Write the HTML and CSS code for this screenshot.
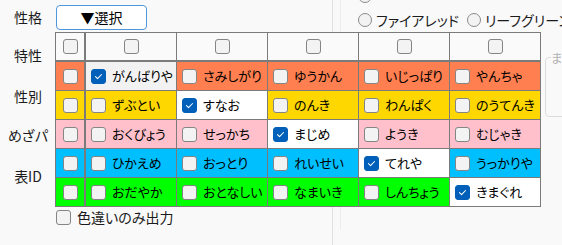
FILE: index.html
```html
<!DOCTYPE html>
<html lang="ja">
<head>
<meta charset="utf-8">
<title>性格選択</title>
<link rel="stylesheet" href="styles.css">
</head>
<body>
<div class="form">
  <div class="left">
    <div class="lrow r1"><span class="lbl">性格</span><button class="select">▼選択</button></div>
    <div class="lrow r2"><span class="lbl">特性</span></div>
    <div class="lrow r3"><span class="lbl">性別</span></div>
    <div class="lrow r4"><span class="lbl">めざパ</span></div>
    <div class="lrow r5"><span class="lbl">表ID</span></div>
  </div>
  <div class="right">
    <div class="right-inner">
      <div class="radios">
        <div class="radio-row"><span class="opt"><span class="radio"></span></span></div>
        <div class="radio-row">
          <span class="opt"><span class="radio"></span>ファイアレッド</span>
          <span class="opt"><span class="radio"></span>リーフグリーン</span>
        </div>
      </div>
      <div class="groupbox"><span class="gcap">ま</span></div>
    </div>
  </div>
</div>

<div class="popup">
  <div class="grid">
    <div class="cell hcell rh"><span class="cb"></span></div>
    <div class="cell hcell"><span class="cb"></span></div>
    <div class="cell hcell"><span class="cb"></span></div>
    <div class="cell hcell"><span class="cb"></span></div>
    <div class="cell hcell"><span class="cb"></span></div>
    <div class="cell hcell"><span class="cb"></span></div>

    <div class="cell rh coral"><span class="cb"></span></div>
    <div class="cell sel"><span class="cb on"><svg viewBox="0 0 15 15"><path d="M4 7.6l2.4 2.4 4.6-4.8"/></svg></span>がんばりや</div>
    <div class="cell coral"><span class="cb"></span>さみしがり</div>
    <div class="cell coral"><span class="cb"></span>ゆうかん</div>
    <div class="cell coral"><span class="cb"></span>いじっぱり</div>
    <div class="cell coral"><span class="cb"></span>やんちゃ</div>

    <div class="cell rh gold"><span class="cb"></span></div>
    <div class="cell gold"><span class="cb"></span>ずぶとい</div>
    <div class="cell white"><span class="cb on"><svg viewBox="0 0 15 15"><path d="M4 7.6l2.4 2.4 4.6-4.8"/></svg></span>すなお</div>
    <div class="cell gold"><span class="cb"></span>のんき</div>
    <div class="cell gold"><span class="cb"></span>わんぱく</div>
    <div class="cell gold"><span class="cb"></span>のうてんき</div>

    <div class="cell rh pink"><span class="cb"></span></div>
    <div class="cell pink"><span class="cb"></span>おくびょう</div>
    <div class="cell pink"><span class="cb"></span>せっかち</div>
    <div class="cell white"><span class="cb on"><svg viewBox="0 0 15 15"><path d="M4 7.6l2.4 2.4 4.6-4.8"/></svg></span>まじめ</div>
    <div class="cell pink"><span class="cb"></span>ようき</div>
    <div class="cell pink"><span class="cb"></span>むじゃき</div>

    <div class="cell rh sky"><span class="cb"></span></div>
    <div class="cell sky"><span class="cb"></span>ひかえめ</div>
    <div class="cell sky"><span class="cb"></span>おっとり</div>
    <div class="cell sky"><span class="cb"></span>れいせい</div>
    <div class="cell white"><span class="cb on"><svg viewBox="0 0 15 15"><path d="M4 7.6l2.4 2.4 4.6-4.8"/></svg></span>てれや</div>
    <div class="cell sky"><span class="cb"></span>うっかりや</div>

    <div class="cell rh lime"><span class="cb"></span></div>
    <div class="cell lime"><span class="cb"></span>おだやか</div>
    <div class="cell lime"><span class="cb"></span>おとなしい</div>
    <div class="cell lime"><span class="cb"></span>なまいき</div>
    <div class="cell lime"><span class="cb"></span>しんちょう</div>
    <div class="cell white"><span class="cb on"><svg viewBox="0 0 15 15"><path d="M4 7.6l2.4 2.4 4.6-4.8"/></svg></span>きまぐれ</div>
  </div>
  <label class="shiny"><span class="cb"></span>色違いのみ出力</label>
</div>
</body>
</html>
```

FILE: styles.css
```css
* { box-sizing: border-box; }
html, body { margin: 0; padding: 0; }
body {
  width: 562px;
  height: 245px;
  overflow: hidden;
  position: relative;
  background: #f9f9f9;
  font-family: "Noto Sans CJK JP", "Noto Sans", sans-serif;
  font-size: 14px;
  line-height: 1.2;
  color: #1b1b1b;
  font-feature-settings: "palt";
}

.form { display: flex; height: 245px; }

.left { width: 332px; flex: none; }
.lrow { display: flex; align-items: center; padding-left: 3px; }
.r1 { height: 34px; }
.r2 { height: 42px; }
.r3 { height: 40px; }
.r4 { height: 38px; }
.r5 { height: 44px; }
.lbl { width: 50px; text-align: center; white-space: nowrap; }
.select {
  margin-left: 3px;
  width: 91px;
  height: 25px;
  padding: 0;
  border: 1px solid #4f97dc;
  border-radius: 4px;
  background: #fff;
  font: inherit;
  color: #000;
  display: flex;
  align-items: center;
  justify-content: center;
}

.right { flex: 1; border-left: 1px solid #e2e2e2; padding-left: 7px; min-width: 0; }
.right-inner { border-left: 1px solid #ececec; padding-left: 17px; height: 100%; }
.radios { margin-top: -16px; }
.radio-row { height: 24px; display: flex; align-items: center; white-space: nowrap; }
.opt { display: flex; align-items: center; width: 109px; flex: none; }
.radio {
  width: 14px;
  height: 14px;
  border: 1px solid #8a8a8a;
  border-radius: 50%;
  background: #f3f3f3;
  margin-right: 4px;
  flex: none;
}
.groupbox {
  margin-top: 25px;
  margin-left: 187px;
  width: 40px;
  height: 60px;
  border: 1px solid #dcdcdc;
  border-radius: 4px;
  padding: 0 0 0 5px;
}
.gcap { display: block; margin-top: -7px; color: #b0b0b0; font-size: 12px; background: #f9f9f9; width: 12px; }

.popup { position: absolute; left: 55px; top: 32px; }
.grid {
  display: grid;
  grid-template-columns: 29px repeat(5, 90px);
  grid-template-rows: 28px repeat(5, 28px);
  gap: 1px;
  background: #7b7b7b;
  border: 1px solid #7b7b7b;
}
.cell {
  display: flex;
  align-items: center;
  gap: 6px;
  padding-left: 5px;
  font-size: 13px;
  color: #000;
  white-space: nowrap;
  overflow: hidden;
}
.hcell { background: #fafafa; margin-bottom: 1px; justify-content: center; padding: 0; }
.rh { margin-right: 1px; justify-content: center; padding: 0; }
.coral { background: #ff7f50; }
.gold { background: #ffd700; }
.pink { background: #ffc0cb; }
.sky { background: #00bfff; }
.lime { background: #00ff00; }
.white { background: #ffffff; }
.sel { background: #f2f2f2; }

.cb {
  width: 15px;
  height: 15px;
  flex: none;
  border: 1px solid #858585;
  border-radius: 3px;
  background: #f3f3f3;
  display: block;
}
.cb.on { background: #005fb8; border-color: #005fb8; }
.cb svg { display: block; width: 13px; height: 13px; }
.cb svg path { fill: none; stroke: #fff; stroke-width: 1.2; stroke-linecap: round; stroke-linejoin: round; }

.shiny {
  display: flex;
  align-items: center;
  gap: 6px;
  margin-top: 2px;
  padding-left: 1px;
  height: 16px;
  white-space: nowrap;
}
```
